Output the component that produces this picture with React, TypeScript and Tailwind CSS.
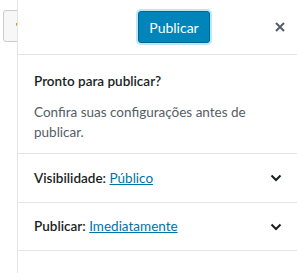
import React from "react";

function Chevron() {
  return (
    <svg width="12" height="8" viewBox="0 0 12 8" fill="none">
      <path d="M1.5 1.5 L6 6 L10.5 1.5" stroke="#191e23" strokeWidth="2" />
    </svg>
  );
}

export default function App() {
  return (
    <div
      className="w-[297px] h-[273px] flex bg-white overflow-hidden"
      style={{ fontFamily: 'Lato, "Noto Sans", sans-serif' }}
    >
      <div className="w-[17px] shrink-0 overflow-hidden pt-[10px] pl-[3px]">
        <div className="w-[30px] h-[32px] rounded-[3px] border border-[#cccccc] bg-[#f7f7f7] pl-[12px] pt-[12px]">
          <div className="w-[1px] h-[2px] bg-[#e0902a]" />
          <div className="w-[1px] h-[1px] bg-[#e6c04a]" />
        </div>
      </div>
      <div className="flex-1 border-l border-[#e2e4e7] flex flex-col">
        <div className="h-[55px] shrink-0 border-b border-[#e2e4e7] flex items-center pl-[120px]">
          <button className="w-[72px] h-[32px] rounded-[3px] bg-[#0085ba] border border-[#006799] text-white text-[14px] shadow-[0_0_0_2px_#bfe7f3] flex items-center justify-center">
            Publicar
          </button>
          <div className="ml-[65px] flex items-center">
            <svg width="10" height="10" viewBox="0 0 10 10">
              <path d="M1 1 L9 9 M9 1 L1 9" stroke="#555d66" strokeWidth="2" />
            </svg>
          </div>
        </div>
        <div className="border-b border-[#e2e4e7] pl-[16px] pr-[16px] pt-[16px] h-[99px] shrink-0">
          <div className="text-[13.5px] font-semibold text-[#191e23] leading-[20px]">
            Pronto para publicar?
          </div>
          <div className="mt-[11px] text-[13.5px] text-[#555d66] leading-[20px]">
            Confira suas configurações antes de publicar.
          </div>
        </div>
        <div className="h-[49px] shrink-0 border-b border-[#e2e4e7] flex items-center justify-between pl-[16px] pr-[15px]">
          <div className="text-[13.5px] text-[#191e23]">
            <span className="font-semibold">Visibilidade:</span>{" "}
            <span className="text-[#0073aa] underline">Público</span>
          </div>
          <Chevron />
        </div>
        <div className="h-[48px] shrink-0 border-b border-[#e2e4e7] flex items-center justify-between pl-[16px] pr-[15px]">
          <div className="text-[13.5px] text-[#191e23]">
            <span className="font-semibold">Publicar:</span>{" "}
            <span className="text-[#0073aa] underline">Imediatamente</span>
          </div>
          <Chevron />
        </div>
      </div>
    </div>
  );
}
